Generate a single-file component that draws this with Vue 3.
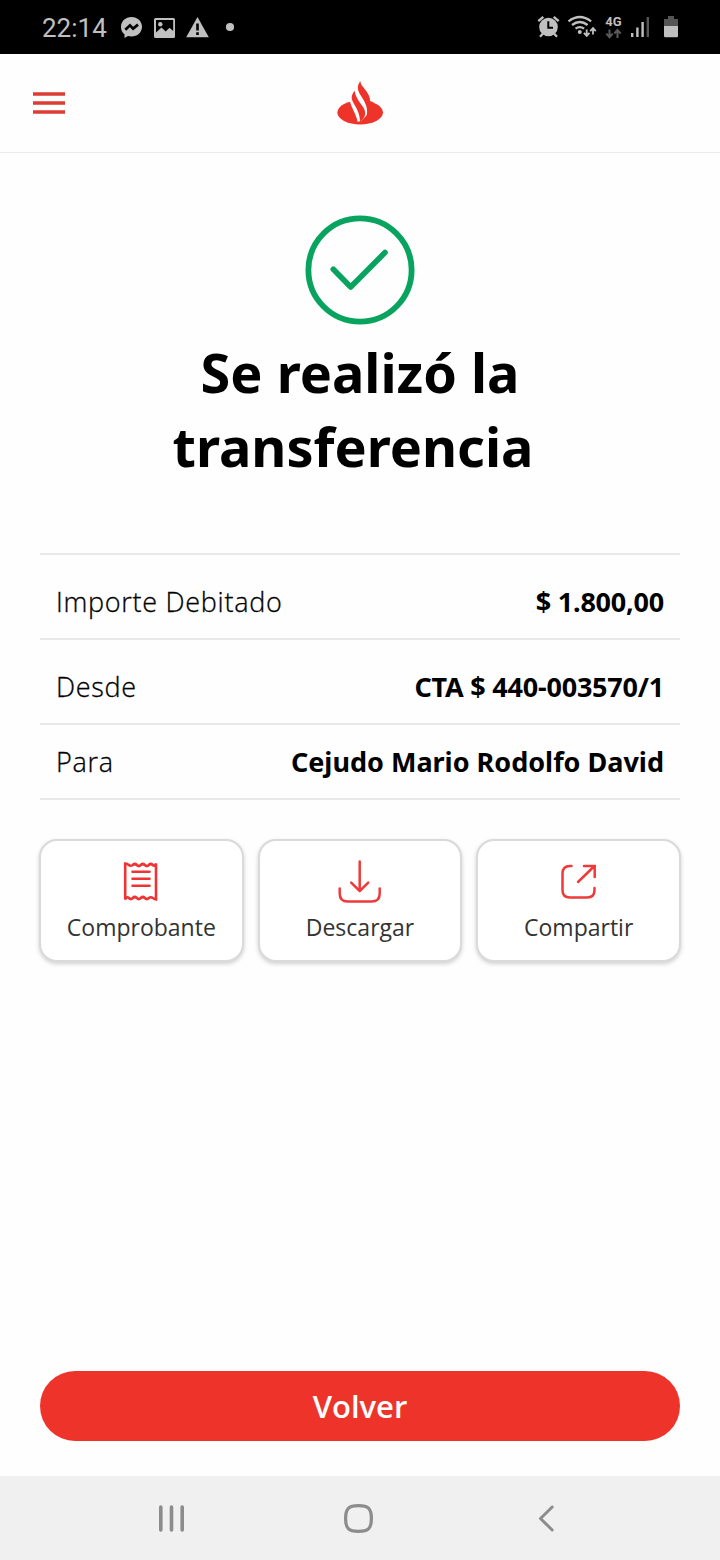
<script setup>
const rows = [
  { label: 'Importe Debitado', value: '$ 1.800,00', tall: true, kind: 'amount' },
  { label: 'Desde', value: 'CTA $ 440-003570/1', tall: true, kind: 'account' },
  { label: 'Para', value: 'Cejudo Mario Rodolfo David', tall: false, kind: 'name' },
]
</script>

<template>
  <div class="screen">
    <div class="status">
      <span class="time">22:14</span>
      <svg class="left-icons" width="120" height="54" viewBox="118 0 120 54">
        <path fill="#c0c0c0" d="M131.500 17c-6 0-10.500 4.300-10.500 9.900 0 3 1.300 5.600 3.500 7.400v3.700l3.500-1.900c1.100.3 2.300.5 3.500.5 6 0 10.500-4.300 10.500-9.800S137.500 17 131.500 17z" />
        <path fill="none" stroke="#000" stroke-width="2.700" d="M125.300 29.800l4.700-4.500 3.100 3.300 4.900-4" />
        <path fill="#c0c0c0" fill-rule="evenodd" d="M155.500 18h18q1.500 0 1.500 1.500v17q0 1.500-1.500 1.500h-18q-1.500 0-1.500-1.500v-17q0-1.500 1.500-1.500zM156 20v12.500l5.500-5 4.200 4 3.800-3.700 3.700 3.300V20z" />
        <circle cx="160.300" cy="24.200" r="2.200" fill="#c0c0c0" />
        <path fill="#c0c0c0" d="M197.500 17l11.300 20.300h-22.600z" />
        <path fill="#000" d="M196.200 23.500h2.600v7h-2.600zM196.200 32.300h2.600v2.600h-2.600z" />
        <circle cx="230" cy="27" r="4.100" fill="#c0c0c0" />
      </svg>
      <svg class="right-icons" width="150" height="54" viewBox="534 0 150 54">
        <g fill="none" stroke="#c0c0c0">
          <path stroke-width="2.400" d="M538.300 21.200l5-4.400M558.700 21.200l-5-4.400M543.500 33l-3.500 3.700M553.500 33l3.500 3.700" />
          <circle cx="548.500" cy="27" r="9.300" fill="#c0c0c0" stroke="none" />
          <path stroke="#000" stroke-width="2" d="M548.300 21.300v6.500h4.700" />
          <path stroke-width="2.300" d="M568.500 21.300q11.300-8.600 22.600 0M572 25q7.800-6 15.600 0M575.500 28.700q4.300-3.200 8.600 0" />
          <path stroke-width="1.800" d="M586.700 29.500v6M583.900 32.900l2.800 3 2.800-3M593 34.500v-6M590.200 31.100l2.800-3 2.800 3" />
          <g stroke="#5a5a5a" stroke-width="2"><path d="M609.500 29.500v7.500M606.300 33.700l3.200 3.500 3.200-3.500M617.500 38v-7.500M614.300 33.500l3.200-3.500 3.200 3.500" /></g>
        </g>
        <circle cx="579.800" cy="32" r="2" fill="#c0c0c0" />
        <path fill="#c0c0c0" d="M631 33h2.400v4H631zM636.200 27.500h2.400V37h-2.400zM641.400 22h2.400v15h-2.400z" />
        <path fill="#555" d="M646.600 17h2.400v20h-2.400zM668 16h6v3h4v7h-14v-7h4z" />
        <path fill="#c0c0c0" d="M664 26h14v10q0 1.300-1.300 1.300h-11.400q-1.300 0-1.300-1.300z" />
        <text x="605.300" y="26" class="net">4G</text>
      </svg>
    </div>

    <header class="bar">
      <svg class="menu" width="32" height="22" viewBox="0 0 32 22">
        <path stroke="#dd3c33" stroke-width="3.600" d="M0 2h32M0 11h32M0 20h32" />
      </svg>
      <svg class="logo" width="48" height="45" viewBox="48 30 144 135">
        <ellipse cx="120.500" cy="124.500" rx="68.500" ry="36" fill="#ee342a" />
        <path fill="#fff" d="M84 80L90 91C92 106 108 129 113 152L124 150C134 138 143 136 142 118L150 92L150 84Z" />
        <path fill="#ee342a" d="M104 59C94 71 93 81 99 93C108 110 120 127 120 152C134 142 140 128 132 113C122 95 107 82 104 59Z" />
        <path fill="#ee342a" d="M121 30C111 44 112 55 119 68C130 87 144 101 141 131L156 124L160 94L150 90C151 82 148 75 142 65C132 49 122 44 121 30Z" />
      </svg>
    </header>

    <main class="content">
      <svg class="check" width="110" height="110" viewBox="0 0 110 110" fill="none" stroke="#08a45f">
        <circle cx="55" cy="55" r="51.600" stroke-width="5.800" />
        <path stroke-width="5.600" stroke-linecap="round" stroke-linejoin="round" d="M28.300 54.300L45.700 72L80 37.500" />
      </svg>
      <h1>Se realizó la<br />transferencia&nbsp;</h1>

      <dl class="details">
        <div v-for="r in rows" :key="r.label" class="row" :class="{ tall: r.tall }">
          <dt>{{ r.label }}</dt>
          <dd :class="r.kind">{{ r.value }}</dd>
        </div>
      </dl>

      <div class="actions">
        <button class="card">
          <svg width="46" height="46" viewBox="0 0 46 46" fill="none" stroke="#ee3434" stroke-width="2.600">
            <path d="M7.200 5.500q2 0 3.600 1.500t4 0q2-2 4 0t4 0q2-2 4 0t4 0q2-2 4 0t3.200-1.500V41.500q-1.200 0-3.200-1.500t-4 0q-2 2-4 0t-4 0q-2 2-4 0t-4 0q-2 2-4 0t-3.600 1.500z" />
            <path stroke-linecap="round" d="M14.500 13.800h17M14.500 20.800h17M14.500 27.800h17" />
          </svg>
          <span>Comprobante</span>
        </button>
        <button class="card">
          <svg width="46" height="46" viewBox="0 0 46 46" fill="none" stroke="#ee3a3a" stroke-width="2.500" stroke-linecap="round" stroke-linejoin="round">
            <path d="M22.700 3.500v29M14.200 24.700l8.500 8.300 8.500-8.300M2.700 30.500v5q0 8 8 8h24q8 0 8-8v-5" />
          </svg>
          <span>Descargar</span>
        </button>
        <button class="card">
          <svg width="46" height="46" viewBox="0 0 46 46" fill="none" stroke="#ee3a3a" stroke-width="2.500" stroke-linecap="round">
            <path d="M15.500 7.900h-1.500q-7.500 0-7.500 7.500v16.500q0 7.500 7.500 7.500h17q7.500 0 7.500-7.500v-2M22 24L38.500 8M28 7.900h10.700v11" />
          </svg>
          <span>Compartir</span>
        </button>
      </div>
    </main>

    <button class="back">Volver</button>

    <nav class="nav">
      <svg width="720" height="84" viewBox="0 0 720 84" fill="none" stroke="#8c8c8c" stroke-linecap="round" stroke-linejoin="round">
        <path stroke-width="3.600" d="M160.800 31v23M171.500 31v23M182.200 31v23" />
        <path stroke-width="3.200" d="M358.500 29.600c10 0 12.900 2.900 12.900 12.900s-2.900 12.900-12.900 12.900-12.900-2.900-12.900-12.900 2.900-12.900 12.900-12.900z" />
        <path stroke-width="3" d="M552.200 31L540.500 42.500L552.200 54" />
      </svg>
    </nav>
  </div>
</template>

<style>
body {
  margin: 0;
}
</style>

<style scoped>
.screen {
  display: flex;
  flex-direction: column;
  width: 720px;
  height: 1560px;
  background: #fefefe;
  color: #000;
  font-family: "Noto Sans", "Open Sans", sans-serif;
  overflow: hidden;
}
.status {
  display: flex;
  flex: none;
  height: 54px;
  background: #000;
  color: #c0c0c0;
}
.time {
  width: 76px;
  padding-left: 42px;
  font: 400 26px/57px Roboto, sans-serif;
}
.right-icons {
  margin-left: auto;
  margin-right: 36px;
}
.net {
  font: 700 13px Roboto, sans-serif;
  fill: #c0c0c0;
}
.bar {
  display: grid;
  grid-template-columns: 1fr 48px 1fr;
  flex: none;
  align-items: center;
  height: 98px;
  border-bottom: 1px solid #ebebeb;
}
.menu {
  margin-left: 33px;
}
.content {
  display: flex;
  flex-direction: column;
  flex: 1;
  padding: 62px 39px 0;
}
.check {
  align-self: center;
}
h1 {
  margin: 10px 0 0;
  font-size: 54px;
  line-height: 74px;
  font-weight: 700;
  text-align: center;
}
.details {
  margin: 70px 1px 0;
  border-top: 2px solid #e8e8e8;
}
.row {
  display: flex;
  justify-content: space-between;
  align-items: center;
  box-sizing: border-box;
  height: 75px;
  padding: 0 16px;
  border-bottom: 2px solid #e8e8e8;
  font-size: 27px;
  line-height: 36px;
}
.row.tall {
  height: 85px;
  padding-top: 11px;
}
dt {
  font-family: "Open Sans", "Noto Sans", sans-serif;
  font-weight: 300;
  letter-spacing: 0.7px;
  -webkit-text-stroke: 0.3px #000;
}
dd {
  margin: 0;
  font-weight: 700;
}
.amount,
.account {
  letter-spacing: -0.22px;
}
.actions {
  display: grid;
  grid-template-columns: repeat(3, 1fr);
  gap: 14px;
  margin-top: 39px;
}
.card {
  display: flex;
  flex-direction: column;
  align-items: center;
  box-sizing: border-box;
  height: 123px;
  padding: 17px 0 0;
  border: 2px solid #dadada;
  border-radius: 18px;
  background: #fff;
  box-shadow: 0 2px 4px rgba(0, 0, 0, 0.18);
  color: #333;
  font: 400 23px/32px "Open Sans", "Noto Sans", sans-serif;
}
.card span {
  margin-top: 7px;
}
.back {
  flex: none;
  height: 70px;
  margin: 0 40px 35px;
  padding: 0;
  border: 0;
  border-radius: 35px;
  background: #ee342a;
  color: #fff;
  font: 600 31px/70px "Open Sans", "Noto Sans", sans-serif;
}
.nav {
  flex: none;
  height: 84px;
  background: #f0f0f0;
}
</style>
